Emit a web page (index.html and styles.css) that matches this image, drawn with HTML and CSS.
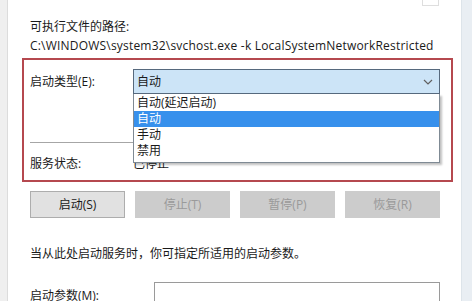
FILE: index.html
```html
<!DOCTYPE html>
<html lang="zh-CN">
  <head>
    <meta charset="UTF-8" />
    <title>服务属性</title>
    <link rel="stylesheet" href="styles.css">
  </head>
  <body>
    <div class="dialog">
      <div class="edge-left"></div>
      <div class="content">
        <div class="top-stub"></div>
        <div class="label path-label">可执行文件的路径:</div>
        <div class="path">C:\WINDOWS\system32\svchost.exe -k LocalSystemNetworkRestricted</div>

        <div class="frame">
          <div class="row type-row">
            <span class="label col-label">启动类型(E):</span>
            <div class="combo">
              <span>自动</span>
              <svg class="chevron" width="10" height="6" viewBox="0 0 10 6">
                <path d="M1 1 L5 5 L9 1" fill="none" stroke="#606060" stroke-width="1.2"/>
              </svg>
              <ul class="dropdown">
                <li>自动(延迟启动)</li>
                <li class="selected">自动</li>
                <li>手动</li>
                <li>禁用</li>
              </ul>
            </div>
          </div>
          <div class="divider"></div>
          <div class="row status-row">
            <span class="label col-label">服务状态:</span>
            <span class="label">已停止</span>
          </div>
        </div>

        <div class="buttons">
          <button class="btn">启动(S)</button>
          <button class="btn" disabled>停止(T)</button>
          <button class="btn" disabled>暂停(P)</button>
          <button class="btn" disabled>恢复(R)</button>
        </div>

        <div class="label hint">当从此处启动服务时，你可指定所适用的启动参数。</div>

        <div class="row param-row">
          <span class="label param-label">启动参数(M):</span>
          <div class="input"></div>
        </div>
      </div>
      <div class="edge-right"></div>
    </div>
  </body>
</html>
```

FILE: styles.css
```css
html,
body {
  margin: 0;
  height: 100%;
  overflow: hidden;
}
body {
  background: #ffffff;
  font-family: "Segoe UI", "Open Sans", "Noto Sans CJK SC", sans-serif;
  font-size: 12px;
  line-height: 18px;
  color: #1a1a1a;
}

.dialog {
  display: flex;
  height: 301px;
}
.edge-left {
  width: 7px;
  background: #efefef;
  border-right: 1px solid #dcdcdc;
}
.edge-right {
  width: 10px;
  background: #e9eef3;
  border-left: 1px solid #dde4ea;
}

.content {
  position: relative;
  flex: 1;
  padding: 0 21px 0 22px;
}
.top-stub {
  position: absolute;
  top: -2px;
  left: 414px;
  width: 15px;
  height: 6px;
  border: 1px solid #dedede;
}

.path-label {
  padding-top: 18px;
}
.path {
  margin-top: 1px;
  white-space: nowrap;
  letter-spacing: 0.2px;
}

.frame {
  margin: 3px -13px 0 -8px;
  padding: 9px 11px 0 6px;
  height: 111px;
  border: 2px solid #b5484f;
}
.row {
  display: flex;
  align-items: center;
}
.col-label {
  width: 103px;
}
.combo {
  position: relative;
  flex: 1;
  height: 23px;
  display: flex;
  align-items: center;
  justify-content: space-between;
  padding: 0 6px 0 3px;
  background: #cce4f7;
  border: 1px solid #56697d;
}
.chevron {
  margin-top: 1px;
}
.dropdown {
  position: absolute;
  top: 24px;
  left: -1px;
  right: -1px;
  margin: 0;
  padding: 1px 0 3px;
  list-style: none;
  background: #ffffff;
  border: 1px solid #7f8a94;
  border-top: none;
  box-shadow: 2px 2px 2px rgba(0, 0, 0, 0.25);
  z-index: 2;
}
.dropdown li {
  height: 16px;
  line-height: 16px;
  padding-left: 3px;
}
.dropdown li.selected {
  background: #3790ec;
  color: #ffffff;
}

.divider {
  margin: 48px 0 0;
  height: 1px;
  background: #a6a6a6;
}
.status-row {
  margin-top: 12px;
}

.buttons {
  display: flex;
  gap: 10px;
  margin-top: 9px;
}
.btn {
  flex: 1;
  height: 27px;
  padding: 0;
  font: inherit;
  color: #1a1a1a;
  background: #e1e1e1;
  border: 1px solid #adadad;
}
.btn:disabled {
  color: #9a9a9a;
  background: #cccccc;
  border-color: #cccccc;
}

.hint {
  margin-top: 27px;
}

.param-row {
  align-items: flex-start;
  margin-top: 19px;
}
.param-label {
  width: 124px;
  padding-top: 5px;
}
.input {
  flex: 1;
  height: 22px;
  border: 1px solid #9a9a9a;
}
```
